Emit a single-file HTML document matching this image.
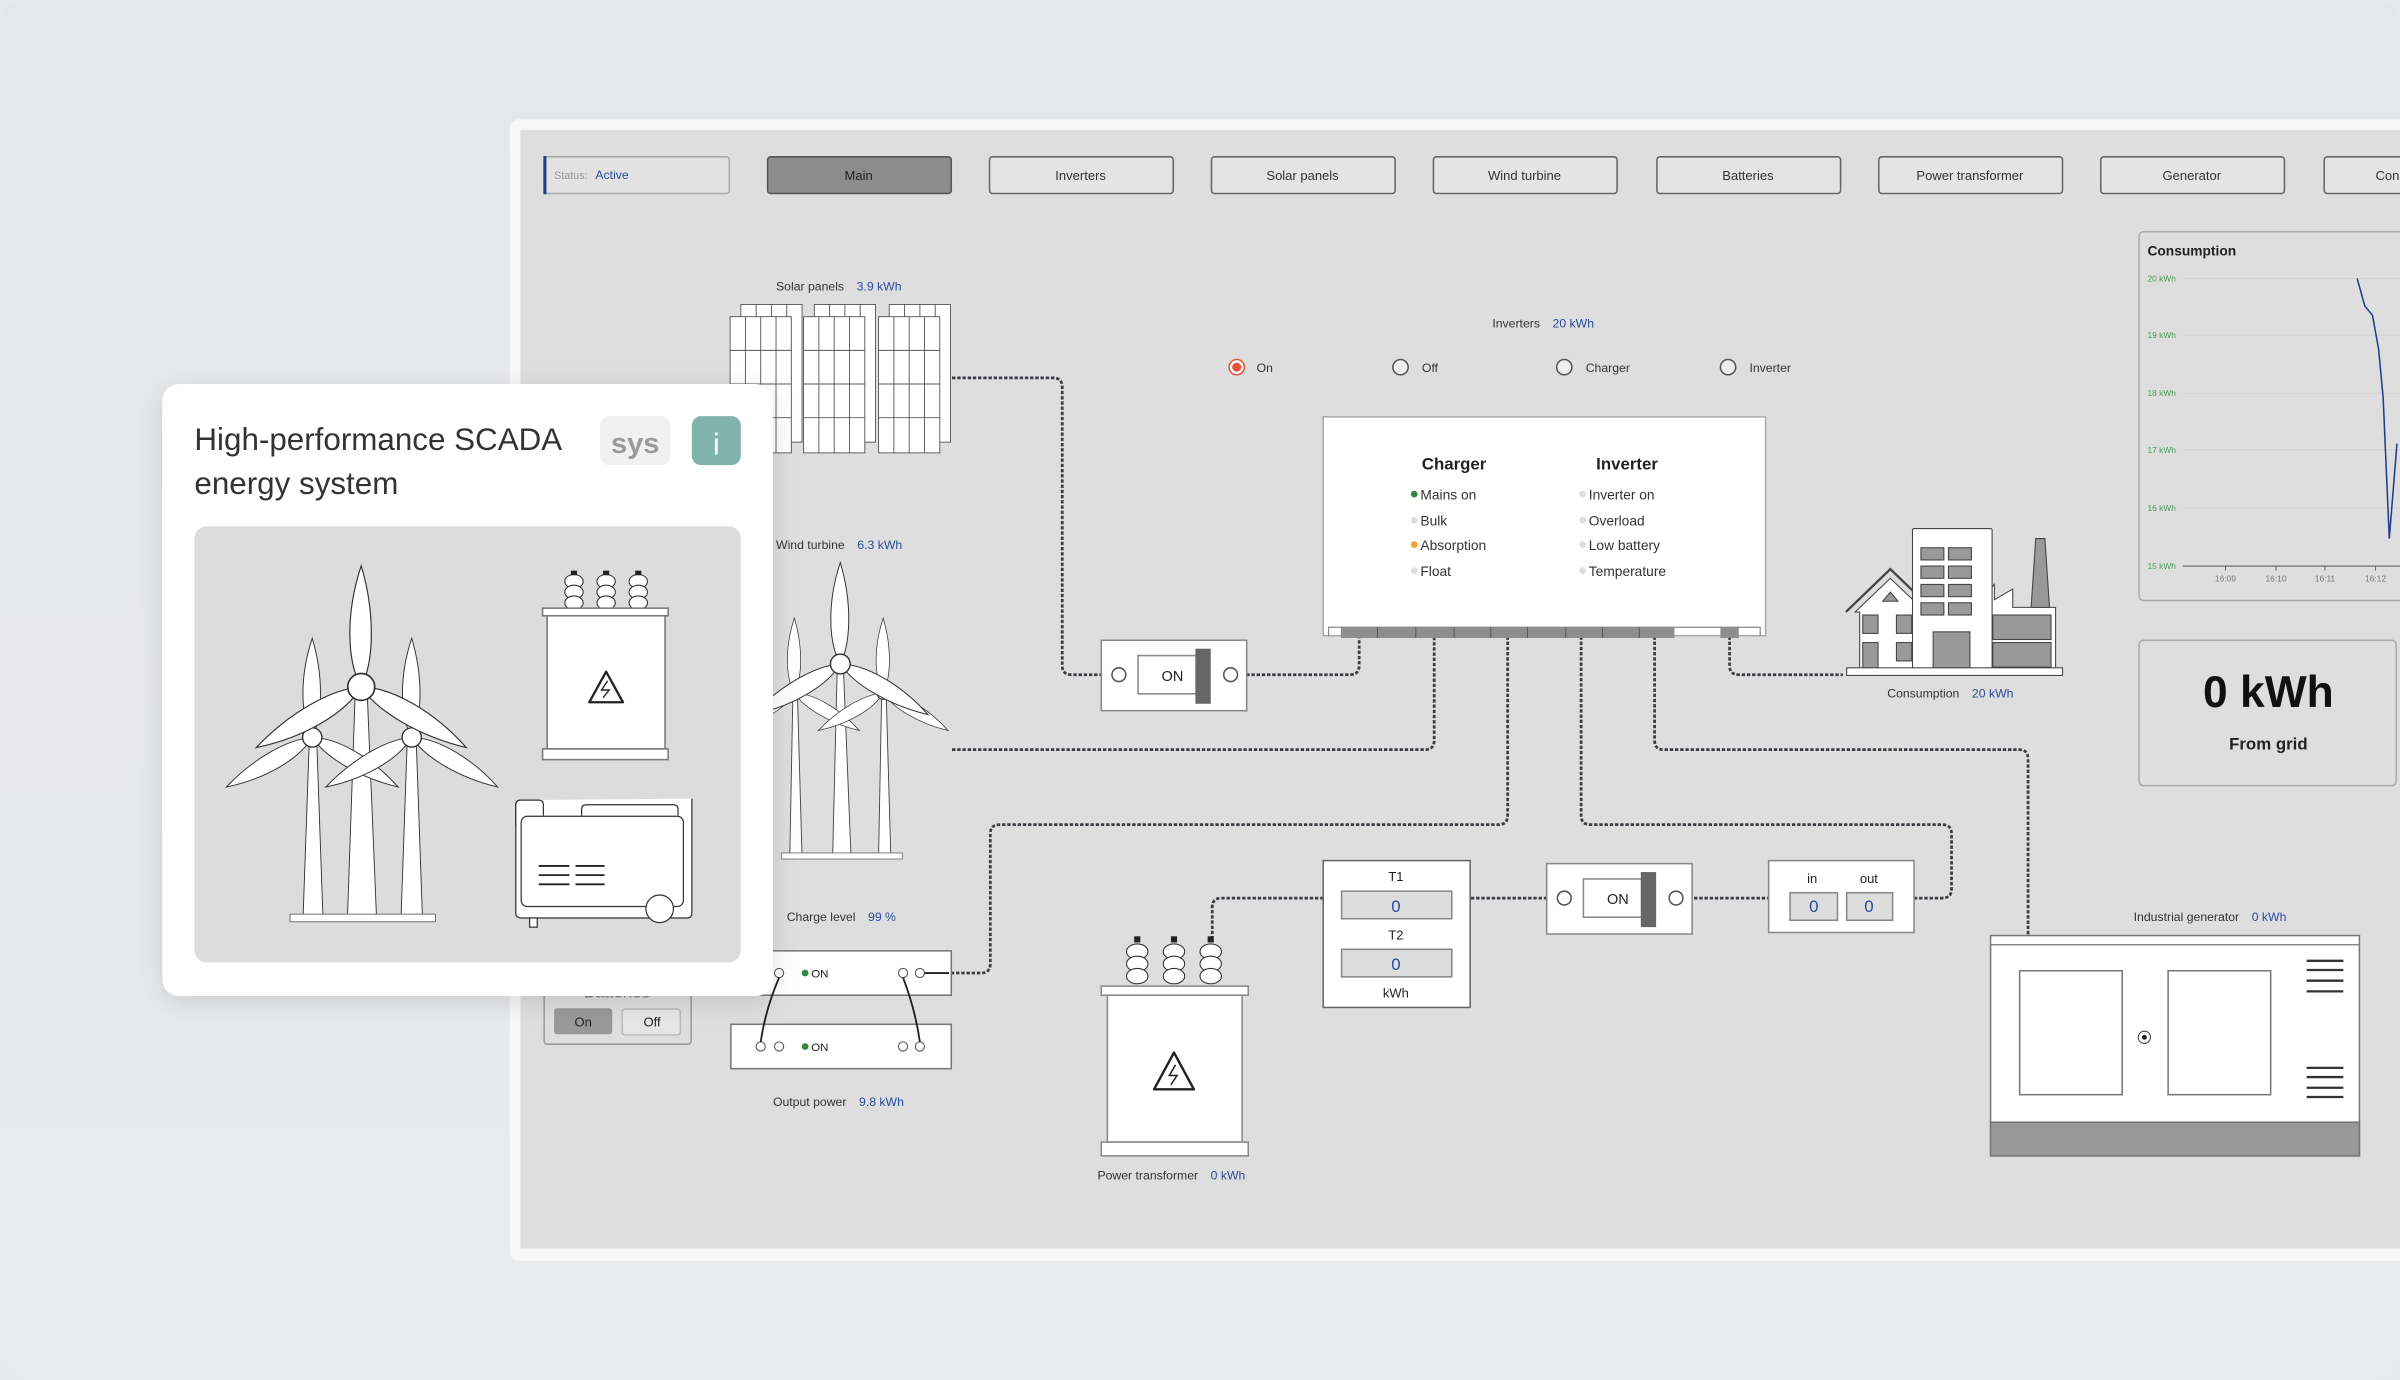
<!DOCTYPE html>
<html><head><meta charset="utf-8"><style>
html,body{margin:0;padding:0;background:#e8e9eb;}
svg{display:block;font-family:"Liberation Sans",sans-serif;}
</style></head><body>
<svg width="2400" height="1380" viewBox="0 0 1568 902" preserveAspectRatio="none" xmlns="http://www.w3.org/2000/svg">
<defs>
<filter id="sh" x="-10%" y="-10%" width="120%" height="125%"><feDropShadow dx="0" dy="4" stdDeviation="8" flood-color="#000" flood-opacity="0.12"/></filter>
<linearGradient id="bg" x1="0" y1="0" x2="0" y2="1"><stop offset="0" stop-color="#e6e7e9"/><stop offset="1" stop-color="#e9eaec"/></linearGradient>
<g id="blade"><path d="M0,0 C-9,-16 -9,-45 0,-72 C8,-45 8,-16 0,0Z" fill="#fff" stroke="#333" stroke-width="0.7"/></g>
</defs>
<rect x="0" y="0" width="1568" height="902" rx="18" fill="url(#bg)"/>
<rect x="333" y="78" width="1240" height="746" rx="6" fill="#f7f7f7"/>
<rect x="340" y="85" width="1230" height="731" fill="#dedede"/>

<g font-size="8.5" text-anchor="middle" fill="#333">
<rect x="355.5" y="102.5" width="121" height="24" rx="2" fill="#e2e2e2" stroke="#a8a8a8"/>
<rect x="355" y="102" width="2" height="25" fill="#1f3f8a"/>
<text x="362" y="117" text-anchor="start" font-size="7" fill="#999">Status:</text>
<text x="389" y="117" text-anchor="start" font-size="8" fill="#2a4a9a">Active</text>
<rect x="501.5" y="102.5" width="120" height="24" rx="2" fill="#8c8c8c" stroke="#555"/>
<text x="561" y="117.5" fill="#222">Main</text>
<g fill="#e4e4e4" stroke="#666">
<rect x="646.5" y="102.5" width="120" height="24" rx="2"/>
<rect x="791.5" y="102.5" width="120" height="24" rx="2"/>
<rect x="936.5" y="102.5" width="120" height="24" rx="2"/>
<rect x="1082.5" y="102.5" width="120" height="24" rx="2"/>
<rect x="1227.5" y="102.5" width="120" height="24" rx="2"/>
<rect x="1372.5" y="102.5" width="120" height="24" rx="2"/>
<rect x="1518.5" y="102.5" width="120" height="24" rx="2"/>
</g>
<text x="706" y="117.5">Inverters</text>
<text x="851" y="117.5">Solar panels</text>
<text x="996" y="117.5">Wind turbine</text>
<text x="1142" y="117.5">Batteries</text>
<text x="1287" y="117.5">Power transformer</text>
<text x="1432" y="117.5">Generator</text>
<text x="1552" y="117.5" text-anchor="start">Con</text>
</g>

<g fill="none" stroke="#3c3c44" stroke-width="1.8" stroke-dasharray="2.2 1.2">
<path d="M622,247 H688 Q694,247 694,253 V435 Q694,441 700,441 H730"/>
<path d="M804,441 H882 Q888,441 888,435 V416"/>
<path d="M622,490 H931 Q937,490 937,484 V416"/>
<path d="M985,416 V533 Q985,539 979,539 H653 Q647,539 647,545 V630 Q647,636 641,636 H602"/>
<path d="M1033,416 V533 Q1033,539 1039,539 H1269 Q1275,539 1275,545 V581 Q1275,587 1269,587 H1251"/>
<path d="M1081,416 V484 Q1081,490 1087,490 H1319 Q1325,490 1325,496 V611"/>
<path d="M1130,416 V435 Q1130,441 1136,441 H1204"/>
<path d="M792,614 V593 Q792,587 798,587 H864"/>
<path d="M961,587 H1016"/>
<path d="M1100,587 H1155"/>
</g>

<g font-size="8" fill="#333">
<text x="507" y="190">Solar panels <tspan fill="#2a4a9a" dx="6">3.9 kWh</tspan></text>
<text x="975" y="214">Inverters <tspan fill="#2a4a9a" dx="6">20 kWh</tspan></text>
<text x="507" y="359">Wind turbine <tspan fill="#2a4a9a" dx="6">6.3 kWh</tspan></text>
<text x="1233" y="456">Consumption <tspan fill="#2a4a9a" dx="6">20 kWh</tspan></text>
<text x="514" y="602">Charge level <tspan fill="#2a4a9a" dx="6">99 %</tspan></text>
<text x="505" y="723">Output power <tspan fill="#2a4a9a" dx="6">9.8 kWh</tspan></text>
<text x="717" y="771">Power transformer <tspan fill="#2a4a9a" dx="6">0 kWh</tspan></text>
<text x="1394" y="602">Industrial generator <tspan fill="#2a4a9a" dx="6">0 kWh</tspan></text>
</g>

<g font-size="8" fill="#333">
<circle cx="808" cy="240" r="5" fill="#fff" stroke="#e0553a"/><circle cx="808" cy="240" r="3" fill="#e0553a"/>
<text x="821" y="243">On</text>
<circle cx="915" cy="240" r="5" fill="#eee" stroke="#555"/><text x="929" y="243">Off</text>
<circle cx="1022" cy="240" r="5" fill="#eee" stroke="#555"/><text x="1036" y="243">Charger</text>
<circle cx="1129" cy="240" r="5" fill="#eee" stroke="#555"/><text x="1143" y="243">Inverter</text>
</g>

<g stroke="#555" stroke-width="0.6" fill="#fff">
<g id="sp">
<rect x="484" y="199" width="40" height="90"/>
<rect x="477" y="207" width="40" height="89"/>
<path d="M487,207V296M497,207V296M507,207V296M477,229H517M477,251H517M477,273H517M494,199V207M504,199V207M514,199V207" fill="none"/>
</g>
<use href="#sp" x="48"/><use href="#sp" x="97"/>
</g>

<rect x="864.5" y="272.5" width="289" height="143" fill="#fff" stroke="#aaa"/>
<path d="M868,416 v-6 h282 v6" fill="none" stroke="#888" stroke-width="0.8"/>
<rect x="876" y="410" width="218" height="7" fill="#8e8e8e"/>
<path d="M900,410v7M925,410v7M950,410v7M974,410v7M998,410v7M1023,410v7M1047,410v7M1071,410v7" stroke="#555" stroke-width="0.6"/>
<rect x="1124" y="410" width="12" height="7" fill="#8e8e8e"/>
<g font-size="11" font-weight="bold" fill="#222" text-anchor="middle"><text x="950" y="307">Charger</text><text x="1063" y="307">Inverter</text></g>
<g font-size="9" fill="#333">
<circle cx="924" cy="323" r="2.2" fill="#2e8b3e"/><text x="928" y="326.5">Mains on</text>
<circle cx="924" cy="340" r="2.2" fill="#ddd"/><text x="928" y="343.5">Bulk</text>
<circle cx="924" cy="356" r="2.2" fill="#f5a030"/><text x="928" y="359.5">Absorption</text>
<circle cx="924" cy="373" r="2.2" fill="#ddd"/><text x="928" y="376.5">Float</text>
<circle cx="1034" cy="323" r="2.2" fill="#ddd"/><text x="1038" y="326.5">Inverter on</text>
<circle cx="1034" cy="340" r="2.2" fill="#ddd"/><text x="1038" y="343.5">Overload</text>
<circle cx="1034" cy="356" r="2.2" fill="#ddd"/><text x="1038" y="359.5">Low battery</text>
<circle cx="1034" cy="373" r="2.2" fill="#ddd"/><text x="1038" y="376.5">Temperature</text>
</g>

<g id="sw">
<rect x="719.5" y="418.5" width="95" height="46" fill="#fff" stroke="#888"/>
<rect x="743.5" y="428.5" width="38" height="25" fill="#fff" stroke="#888"/>
<rect x="781" y="424" width="10" height="36" fill="#666"/>
<text x="766" y="445" font-size="9.5" fill="#222" text-anchor="middle">ON</text>
<circle cx="731" cy="441" r="4.5" fill="#fff" stroke="#555"/>
<circle cx="804" cy="441" r="4.5" fill="#fff" stroke="#555"/>
</g>
<use href="#sw" x="291" y="146"/>

<g>
<path d="M516,560 L518,455 L521,455 L524,560Z" fill="#fff" stroke="#444" stroke-width="0.6"/>
<path d="M574,560 L576,455 L579,455 L582,560Z" fill="#fff" stroke="#444" stroke-width="0.6"/>
<path d="M544,560 L547,436 L551,436 L556,560Z" fill="#fff" stroke="#444" stroke-width="0.6"/>
<g transform="translate(519,453) scale(0.68)"><use href="#blade"/><use href="#blade" transform="rotate(120)"/><use href="#blade" transform="rotate(240)"/><circle r="6" fill="#fff" stroke="#333"/></g>
<g transform="translate(577,453) scale(0.68)"><use href="#blade"/><use href="#blade" transform="rotate(120)"/><use href="#blade" transform="rotate(240)"/><circle r="6" fill="#fff" stroke="#333"/></g>
<g transform="translate(549,434) scale(0.92)"><use href="#blade"/><use href="#blade" transform="rotate(120)"/><use href="#blade" transform="rotate(240)"/><circle r="7" fill="#fff" stroke="#333"/></g>
<rect x="510.5" y="557.5" width="79" height="4" fill="#fff" stroke="#777" stroke-width="0.6"/>
</g>

<rect x="355.5" y="630.5" width="96" height="52" rx="2" fill="#dedede" stroke="#999"/>
<text x="403" y="652" font-size="11" fill="#777" text-anchor="middle">Batteries</text>
<rect x="362" y="659" width="38" height="17" rx="2" fill="#999"/><text x="381" y="671" font-size="8.5" text-anchor="middle" fill="#222">On</text>
<rect x="406.5" y="659.5" width="38" height="17" rx="2" fill="#e6e6e6" stroke="#bbb"/><text x="426" y="671" font-size="8.5" text-anchor="middle" fill="#222">Off</text>
<rect x="477.5" y="621.5" width="144" height="29" fill="#fff" stroke="#777"/>
<rect x="477.5" y="669.5" width="144" height="29" fill="#fff" stroke="#777"/>
<g fill="#fff" stroke="#555" stroke-width="0.7">
<circle cx="509" cy="636" r="3"/><circle cx="590" cy="636" r="3"/><circle cx="601" cy="636" r="3"/>
<circle cx="497" cy="684" r="3"/><circle cx="509" cy="684" r="3"/><circle cx="590" cy="684" r="3"/><circle cx="601" cy="684" r="3"/>
</g>
<path d="M509,639 Q500,660 497,681 M590,639 Q598,660 601,681 M604,636 H620" fill="none" stroke="#222" stroke-width="1.2"/>
<g font-size="7.5" fill="#222"><circle cx="526" cy="636" r="2.2" fill="#2e8b3e"/><text x="530" y="639">ON</text><circle cx="526" cy="684" r="2.2" fill="#2e8b3e"/><text x="530" y="687">ON</text></g>

<g>
<g fill="#fff" stroke="#333" stroke-width="0.7">
<ellipse cx="743" cy="622" rx="7" ry="5"/><ellipse cx="743" cy="630" rx="7" ry="5"/><ellipse cx="743" cy="638" rx="7" ry="5"/>
<ellipse cx="767" cy="622" rx="7" ry="5"/><ellipse cx="767" cy="630" rx="7" ry="5"/><ellipse cx="767" cy="638" rx="7" ry="5"/>
<ellipse cx="791" cy="622" rx="7" ry="5"/><ellipse cx="791" cy="630" rx="7" ry="5"/><ellipse cx="791" cy="638" rx="7" ry="5"/>
</g>
<rect x="741" y="612" width="4" height="4" fill="#222"/><rect x="765" y="612" width="4" height="4" fill="#222"/><rect x="789" y="612" width="4" height="4" fill="#222"/>
<rect x="719.5" y="644.5" width="96" height="6" fill="#fff" stroke="#888"/>
<rect x="723.5" y="650.5" width="88" height="96" fill="#fff" stroke="#888"/>
<rect x="719.5" y="746.5" width="96" height="9" fill="#fff" stroke="#888"/>
<path d="M767,688 L780,712 L754,712Z" fill="none" stroke="#222" stroke-width="1.6" stroke-linejoin="round"/>
<path d="M768,696 L764,703 L769,703 L765,709" fill="none" stroke="#222" stroke-width="1"/>
</g>

<rect x="864.5" y="562.5" width="96" height="96" fill="#fff" stroke="#666"/>
<g font-size="8.5" fill="#222" text-anchor="middle"><text x="912" y="576">T1</text><text x="912" y="614">T2</text><text x="912" y="652">kWh</text></g>
<rect x="876.5" y="582.5" width="72" height="18" fill="#ddd" stroke="#888"/>
<rect x="876.5" y="620.5" width="72" height="18" fill="#ddd" stroke="#888"/>
<g font-size="11" fill="#2a4a9a" text-anchor="middle"><text x="912" y="596">0</text><text x="912" y="634">0</text></g>

<rect x="1155.5" y="562.5" width="95" height="47" fill="#fff" stroke="#888"/>
<g font-size="8.5" fill="#222" text-anchor="middle"><text x="1184" y="577">in</text><text x="1221" y="577">out</text></g>
<rect x="1169.5" y="583.5" width="31" height="18" fill="#ddd" stroke="#888"/>
<rect x="1206.5" y="583.5" width="30" height="18" fill="#ddd" stroke="#888"/>
<g font-size="11" fill="#2a4a9a" text-anchor="middle"><text x="1185" y="596">0</text><text x="1221" y="596">0</text></g>

<g stroke="#444" stroke-width="0.7">
<path d="M1212,400 L1235,378 L1256,398 V437 H1215 V400Z" fill="#fff"/>
<path d="M1206,400 L1235,372 L1260,396" fill="none" stroke-width="1.5"/>
<path d="M1230,393 L1235,387 L1240,393Z" fill="#999"/>
<rect x="1217" y="402" width="10" height="12" fill="#999"/><rect x="1239" y="402" width="10" height="12" fill="#999"/>
<rect x="1239" y="420" width="10" height="12" fill="#999"/><rect x="1217" y="420" width="10" height="17" fill="#999"/>
<path d="M1300,437 V385 L1303,382 V392 L1315,385 V397 H1343 V437Z" fill="#fff"/>
<path d="M1327,397 L1330,352 H1336 L1339,397Z" fill="#999"/>
<rect x="1302" y="402" width="38" height="16" fill="#999"/><rect x="1302" y="420" width="38" height="16" fill="#999"/>
<rect x="1249.5" y="345.5" width="52" height="92" rx="1" fill="#fff"/>
<g fill="#999"><rect x="1255" y="358" width="15" height="8"/><rect x="1273" y="358" width="15" height="8"/><rect x="1255" y="370" width="15" height="8"/><rect x="1273" y="370" width="15" height="8"/><rect x="1255" y="382" width="15" height="8"/><rect x="1273" y="382" width="15" height="8"/><rect x="1255" y="394" width="15" height="8"/><rect x="1273" y="394" width="15" height="8"/><rect x="1263" y="413" width="24" height="24"/></g>
<rect x="1206.5" y="436.5" width="141" height="5" fill="#fff"/>
</g>

<rect x="1397.5" y="151.5" width="180" height="241" rx="3" fill="#dedede" stroke="#aaa"/>
<text x="1403" y="167" font-size="9" font-weight="bold" fill="#222">Consumption</text>
<g font-size="5.5" fill="#4a9a5a">
<text x="1403" y="184">20 kWh</text><text x="1403" y="221">19 kWh</text><text x="1403" y="259">18 kWh</text><text x="1403" y="296">17 kWh</text><text x="1403" y="334">16 kWh</text><text x="1403" y="372">15 kWh</text>
</g>
<g stroke="#cfcfcf" stroke-width="0.6"><path d="M1426,182H1568M1426,219H1568M1426,257H1568M1426,294H1568M1426,332H1568"/></g>
<path d="M1426,370H1568M1454,370v3M1487,370v3M1519,370v3M1552,370v3" stroke="#666" stroke-width="0.7"/>
<g font-size="5.5" fill="#777" text-anchor="middle"><text x="1454" y="380">16:09</text><text x="1487" y="380">16:10</text><text x="1519" y="380">16:11</text><text x="1552" y="380">16:12</text></g>
<path d="M1540,182 L1545,200 L1550,206 L1554,228 L1557,260 L1561,352 L1566,290" fill="none" stroke="#1f3f8a" stroke-width="1"/>

<rect x="1397.5" y="418.5" width="168" height="95" rx="3" fill="#dedede" stroke="#aaa"/>
<text x="1482" y="462" font-size="29" font-weight="bold" fill="#111" text-anchor="middle">0 kWh</text>
<text x="1482" y="490" font-size="11" font-weight="bold" fill="#222" text-anchor="middle">From grid</text>

<rect x="1300.5" y="611.5" width="241" height="144" fill="#fff" stroke="#777"/>
<path d="M1300.5,617.5 H1541.5" stroke="#888"/>
<rect x="1300.5" y="733.5" width="241" height="22" fill="#999" stroke="#777"/>
<rect x="1319.5" y="634.5" width="67" height="81" fill="#fff" stroke="#777"/>
<rect x="1416.5" y="634.5" width="67" height="81" fill="#fff" stroke="#777"/>
<circle cx="1401" cy="678" r="4" fill="#fff" stroke="#444" stroke-width="0.7"/><circle cx="1401" cy="678" r="1.6" fill="#222"/>
<path d="M1507,628H1531M1507,634H1531M1507,641H1531M1507,648H1531M1507,698H1531M1507,704H1531M1507,711H1531M1507,717H1531" stroke="#333" stroke-width="1.5"/>

<rect x="106" y="251" width="399" height="400" rx="11" fill="#fff" filter="url(#sh)"/>
<text x="127" y="294" font-size="20.5" fill="#333">High-performance SCADA</text>
<text x="127" y="323" font-size="20.5" fill="#333">energy system</text>
<rect x="392" y="272" width="46" height="32" rx="6" fill="#f1f1f1"/>
<text x="415" y="296" font-size="19" font-weight="bold" fill="#9a9a9a" text-anchor="middle">sys</text>
<rect x="452" y="272" width="32" height="32" rx="6" fill="#80b4ac"/>
<text x="468" y="297" font-size="20" fill="#fff" text-anchor="middle">i</text>
<rect x="127" y="344" width="357" height="285" rx="8" fill="#dcdcdc"/>

<g>
<path d="M198,600 L202,486 L207,486 L211,600Z" fill="#fff" stroke="#333" stroke-width="0.6"/>
<path d="M262,600 L266,486 L272,486 L276,600Z" fill="#fff" stroke="#333" stroke-width="0.6"/>
<path d="M227,600 L232,455 L240,455 L246,600Z" fill="#fff" stroke="#333" stroke-width="0.6"/>
<g transform="translate(204,482) scale(0.9)"><use href="#blade"/><use href="#blade" transform="rotate(120)"/><use href="#blade" transform="rotate(240)"/><circle r="7" fill="#fff" stroke="#333"/></g>
<g transform="translate(269,482) scale(0.9)"><use href="#blade"/><use href="#blade" transform="rotate(120)"/><use href="#blade" transform="rotate(240)"/><circle r="7" fill="#fff" stroke="#333"/></g>
<g transform="translate(236,449) scale(1.1)"><use href="#blade"/><use href="#blade" transform="rotate(120)"/><use href="#blade" transform="rotate(240)"/><circle r="8" fill="#fff" stroke="#333"/></g>
<rect x="189.5" y="597.5" width="95" height="5" fill="#fff" stroke="#666" stroke-width="0.6"/>
</g>
<g>
<g fill="#fff" stroke="#333" stroke-width="0.7">
<ellipse cx="375" cy="380" rx="6" ry="4.5"/><ellipse cx="375" cy="387" rx="6" ry="4.5"/><ellipse cx="375" cy="394" rx="6" ry="4.5"/>
<ellipse cx="396" cy="380" rx="6" ry="4.5"/><ellipse cx="396" cy="387" rx="6" ry="4.5"/><ellipse cx="396" cy="394" rx="6" ry="4.5"/>
<ellipse cx="417" cy="380" rx="6" ry="4.5"/><ellipse cx="417" cy="387" rx="6" ry="4.5"/><ellipse cx="417" cy="394" rx="6" ry="4.5"/>
</g>
<rect x="373" y="373" width="4" height="3" fill="#222"/><rect x="394" y="373" width="4" height="3" fill="#222"/><rect x="415" y="373" width="4" height="3" fill="#222"/>
<rect x="354.5" y="397.5" width="82" height="5" fill="#fff" stroke="#777"/>
<rect x="357.5" y="402.5" width="77" height="87" fill="#fff" stroke="#777"/>
<rect x="354.5" y="489.5" width="82" height="7" fill="#fff" stroke="#777"/>
<path d="M396,439 L407,459 L385,459Z" fill="none" stroke="#222" stroke-width="1.5" stroke-linejoin="round"/>
<path d="M397,445 L393,451 L398,451 L394,456" fill="none" stroke="#222" stroke-width="0.9"/>
</g>
<g fill="#fff" stroke="#333" stroke-width="0.8">
<path d="M452,522 V597 Q452,600 449,600 H341 Q337,600 337,597 V526 Q337,523 340,523"/>
<path d="M337,540 V526 Q337,523 340,523 H352 Q355,523 355,526 V533"/>
<path d="M380,533 V529 Q380,526 383,526 H440 Q443,526 443,529 V533"/>
<rect x="340.5" y="533.5" width="106" height="59" rx="4"/>
<rect x="346" y="600" width="5" height="6"/>
<circle cx="431" cy="594" r="9"/>
</g>
<path d="M352,566H372M352,572H372M352,578H372M376,566H395M376,572H395M376,578H395" stroke="#222" stroke-width="1.2"/>
</svg>
</body></html>
